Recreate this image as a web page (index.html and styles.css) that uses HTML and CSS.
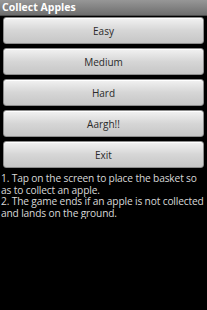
FILE: index.html
```html
<!DOCTYPE html>
<html lang="en">
<head>
    <meta charset="UTF-8">
    <meta name="viewport" content="width=device-width, initial-scale=1.0">
    <title>Collect Apples</title>
    <link rel="stylesheet" href="styles.css">
</head>
<body>

<div class="title-bar">Collect Apples</div>

<div class="menu">
    <button class="menu-btn">Easy</button>
    <button class="menu-btn">Medium</button>
    <button class="menu-btn">Hard</button>
    <button class="menu-btn">Aargh!!</button>
    <button class="menu-btn">Exit</button>
</div>

<div class="help">
    <div class="help-line">1. Tap on the screen to place the basket so</div>
    <div class="help-line">as to collect an apple.</div>
    <div class="help-line">2. The game ends if an apple is not collected</div>
    <div class="help-line">and lands on the ground.</div>
</div>

</body>
</html>
```

FILE: styles.css
```css
/* Old android style menu screen */
body {
    margin: 0;
    background-color: #000;
    font-family: "Open Sans", "Noto Sans", sans-serif;
}
.title-bar {
    height: 15px;
    line-height: 15px;
    padding-left: 2px;
    color: #fff;
    font-size: 10.5px;
    font-weight: bold;
    background: linear-gradient(#979797, #6e6e6e);
    border-bottom: 1px solid #4a4a4a;
}
.menu {
    display: flex;
    flex-direction: column;
    gap: 4px;
    padding: 1px 3px 0 3px;
}
.menu-btn {
    height: 27px;
    padding: 0;
    font-family: inherit;
    font-size: 10px;
    color: #2a2a2a;
    background: linear-gradient(#f2f2f2, #d6d6d6 50%, #c6c6c6);
    border: 1px solid #8c8c8c;
    border-radius: 3px;
    box-shadow: inset 0 1px 0 #fff;
}
.help {
    margin: 5px 0 0 1px;
    color: #d8d8d8;
    font-size: 10.2px;
    letter-spacing: -0.15px;
}
.help-line {
    height: 11.6px;
    line-height: 11.6px;
    white-space: nowrap;
}
```
